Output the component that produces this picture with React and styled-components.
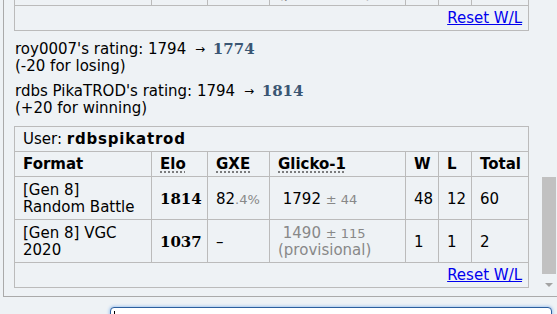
import React from "react";
import styled, { createGlobalStyle } from "styled-components";

const Global = createGlobalStyle`
  html, body { margin: 0; padding: 0; background: #eef2f5; }
  body { font-family: "DejaVu Sans", Verdana, sans-serif; font-size: 15px; color: #000; overflow: hidden; }
`;

const Page = styled.div`
  width: 557px;
  height: 314px;
  display: flex;
  flex-direction: column;
  overflow: hidden;
`;

const Log = styled.div`
  height: 296px;
  margin-left: 3px;
  border-left: 1px solid #aaa;
  border-bottom: 1px solid #aaa;
  display: flex;
  flex-shrink: 0;
  overflow: hidden;
`;

const LogInner = styled.div`
  flex: 1;
  display: flex;
  flex-direction: column;
  justify-content: flex-end;
  padding: 0 13px 8px 10px;
  overflow: hidden;
`;

const Msg = styled.div`
  flex-shrink: 0;
  line-height: 17px;
  margin: ${(p) => p.$mt || 0}px 0 0 1px;
`;

const Arrow = styled.span`
  display: inline-block;
  font-size: 12px;
  margin: 0 3px 0 4px;
  vertical-align: 1px;
`;

const NewRating = styled.strong`
  font-family: "DejaVu Serif", Georgia, serif;
  color: #3a5673;
`;

const Table = styled.table`
  flex-shrink: 0;
  width: 514px;
  table-layout: fixed;
  border-collapse: collapse;
  border: 1px solid #bbb;
  margin-top: ${(p) => p.$mt || 0}px;
  line-height: 17px;
`;

const Td = styled.td`
  border: 1px solid #bbb;
  padding: 5px 7px 3px 8px;
  vertical-align: middle;
  text-align: ${(p) => (p.$right ? "right" : "left")};
`;

const UserCell = styled(Td)`
  padding: 4px 8px 3px 8px;
`;

const ResetCell = styled(Td)`
  padding: 4px 6px 3px 8px;
  text-align: right;
`;

const UserName = styled.strong`
  letter-spacing: 0.8px;
`;

const Th = styled.th`
  border: 1px solid #bbb;
  padding: 4px 7px 3px 8px;
  text-align: left;
  font-weight: bold;
`;

const Abbr = styled.abbr`
  text-decoration: underline dotted #555;
  text-underline-offset: 3px;
`;

const Elo = styled.strong`
  font-family: "DejaVu Serif", Georgia, serif;
`;

const Small = styled.small`
  font-size: 13px;
  color: #888;
`;

const Muted = styled.span`
  color: #888;
`;

const ResetLink = styled.a`
  color: #0000ee;
  text-decoration: underline;
  cursor: pointer;
`;

const Scrollbar = styled.div`
  width: 16px;
  flex-shrink: 0;
  display: flex;
  flex-direction: column;
  justify-content: flex-end;
  align-items: center;
`;

const Thumb = styled.div`
  width: 14px;
  height: 97px;
  background: #c1c1c1;
`;

const ArrowBtn = styled.div`
  height: 22px;
  width: 16px;
  display: flex;
  align-items: center;
  justify-content: center;
`;

const Triangle = styled.div`
  width: 0;
  height: 0;
  border-left: 4px solid transparent;
  border-right: 4px solid transparent;
  border-top: 4px solid #a3a3a3;
`;

const ChatBar = styled.div`
  display: flex;
  align-items: flex-start;
  padding: 10px 5px 0 22px;
`;

const NameLabel = styled.div`
  width: 88px;
  flex-shrink: 0;
  padding-top: 5px;
  font-weight: bold;
  color: #6a4bd0;
  font-size: 14px;
`;

const TextBox = styled.div`
  flex: 1;
  height: 30px;
  border: 1px solid #2c5f9e;
  border-radius: 4px;
  box-shadow: 0 0 3px 1px #a8c8ee;
  background: #fff;
  padding: 3px 3px;
  display: flex;
`;

const Caret = styled.div`
  width: 1px;
  height: 18px;
  background: #000;
`;

function Header() {
  return (
    <tr>
      <Th>Format</Th>
      <Th><Abbr title="Elo rating">Elo</Abbr></Th>
      <Th><Abbr title="Glicko X-Act Estimate">GXE</Abbr></Th>
      <Th><Abbr title="Glicko-1 rating">Glicko-1</Abbr></Th>
      <Th>W</Th>
      <Th>L</Th>
      <Th>Total</Th>
    </tr>
  );
}

function Cols() {
  return (
    <colgroup>
      <col style={{ width: 137 }} />
      <col style={{ width: 56 }} />
      <col style={{ width: 62 }} />
      <col style={{ width: 136 }} />
      <col style={{ width: 33 }} />
      <col style={{ width: 33 }} />
      <col style={{ width: 57 }} />
    </colgroup>
  );
}

function RatingTable({ user, rows, mt }) {
  return (
    <Table $mt={mt}>
      <Cols />
      <tbody>
        <tr>
          <UserCell colSpan={7}>
            User: <UserName>{user}</UserName>
          </UserCell>
        </tr>
        <Header />
        {rows.map((r) => (
          <tr key={r.format}>
            <Td>{r.format}</Td>
            <Td><Elo>{r.elo}</Elo></Td>
            <Td>{r.gxe}</Td>
            <Td>{r.glicko}</Td>
            <Td>{r.w}</Td>
            <Td>{r.l}</Td>
            <Td>{r.total}</Td>
          </tr>
        ))}
        <tr>
          <ResetCell colSpan={7}>
            <ResetLink>Reset W/L</ResetLink>
          </ResetCell>
        </tr>
      </tbody>
    </Table>
  );
}

const roy = [
  {
    format: "[Gen 8] Random Battle",
    elo: "1774",
    gxe: <>78<Small>.1%</Small></>,
    glicko: <>{"\u00a0"}1741 <Small>± 52</Small></>,
    w: "40",
    l: "13",
    total: "53",
  },
  {
    format: "[Gen 8] OU",
    elo: "1102",
    gxe: "–",
    glicko: (
      <Muted>
        {"\u00a0"}1512 <Small>± 120</Small>
        <br />
        (provisional)
      </Muted>
    ),
    w: "2",
    l: "1",
    total: "3",
  },
];

const pika = [
  {
    format: "[Gen 8] Random Battle",
    elo: "1814",
    gxe: <>82<Small>.4%</Small></>,
    glicko: <>{"\u00a0"}1792 <Small>± 44</Small></>,
    w: "48",
    l: "12",
    total: "60",
  },
  {
    format: "[Gen 8] VGC 2020",
    elo: "1037",
    gxe: "–",
    glicko: (
      <Muted>
        {"\u00a0"}1490 <Small>± 115</Small>
        <br />
        (provisional)
      </Muted>
    ),
    w: "1",
    l: "1",
    total: "2",
  },
];

export default function App() {
  return (
    <>
      <Global />
      <Page>
        <Log>
          <LogInner>
            <RatingTable user="roy0007" rows={roy} />
            <Msg $mt={10}>
              roy0007's rating: 1794 <Arrow>→</Arrow> <NewRating>1774</NewRating>
              <br />
              (-20 for losing)
            </Msg>
            <Msg $mt={8}>
              rdbs PikaTROD's rating: 1794 <Arrow>→</Arrow> <NewRating>1814</NewRating>
              <br />
              (+20 for winning)
            </Msg>
            <RatingTable user="rdbspikatrod" rows={pika} mt={9} />
          </LogInner>
          <Scrollbar>
            <Thumb />
            <ArrowBtn>
              <Triangle />
            </ArrowBtn>
          </Scrollbar>
        </Log>
        <ChatBar>
          <NameLabel>Hatfield:</NameLabel>
          <TextBox>
            <Caret />
          </TextBox>
        </ChatBar>
      </Page>
    </>
  );
}
